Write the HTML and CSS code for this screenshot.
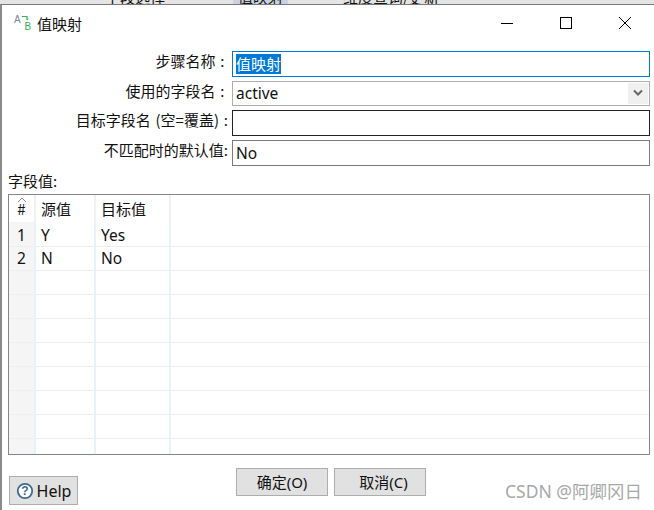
FILE: index.html
```html
<!DOCTYPE html>
<html lang="zh-CN">
<head>
  <meta charset="UTF-8" />
  <title>值映射</title>
  <link rel="stylesheet" href="styles.css">
</head>
<body>
  <div class="backdrop">
    <span class="tab-a">字段选择</span>
    <span class="tab-b">值映射</span>
    <span class="tab-c">维度查询/更新</span>
  </div>

  <div class="dialog">
    <div class="titlebar">
      <svg class="app-icon" width="18" height="18" viewBox="0 0 18 18">
        <text x="1" y="9" class="icon-a">A</text>
        <path d="M9 2.5h5v2" fill="none" stroke="#35b05a" stroke-width="1.2"/>
        <path d="M12.5 4.5h3.5l-1.7 2z" fill="#35b05a"/>
        <text x="11.5" y="16" class="icon-b">B</text>
      </svg>
      <span class="title">值映射</span>
      <div class="win-buttons">
        <svg width="14" height="14" viewBox="0 0 14 14"><path d="M1 7.5h12" stroke="#000" fill="none"/></svg>
        <svg width="14" height="14" viewBox="0 0 14 14"><rect x="1.5" y="1.5" width="11" height="11" stroke="#000" fill="none"/></svg>
        <svg width="14" height="14" viewBox="0 0 14 14"><path d="M1 1l12 12M13 1L1 13" stroke="#000" fill="none"/></svg>
      </div>
    </div>

    <div class="form">
      <div class="form-row">
        <label class="label-inset">步骤名称 :</label>
        <div class="field field-focus"><span class="selected">值映射</span></div>
      </div>
      <div class="form-row">
        <label class="label-inset">使用的字段名 :</label>
        <div class="field field-combo">
          active
          <span class="combo-btn">
            <svg width="10" height="8" viewBox="0 0 10 8"><path d="M1 1.5l4 4 4-4" stroke="#666" stroke-width="2" fill="none"/></svg>
          </span>
        </div>
      </div>
      <div class="form-row">
        <label>目标字段名 (空=覆盖) :</label>
        <div class="field field-dark"></div>
      </div>
      <div class="form-row">
        <label>不匹配时的默认值:</label>
        <div class="field field-gray">No</div>
      </div>
    </div>

    <div class="grid-label">字段值:</div>
    <div class="grid-wrap">
      <table class="grid">
        <colgroup>
          <col class="col-num"><col class="col-src"><col class="col-dst"><col>
        </colgroup>
        <thead>
          <tr>
            <th class="num">
              <svg class="sort" width="10" height="5" viewBox="0 0 10 5"><path d="M1 5l4-4 4 4" stroke="#888" fill="none"/></svg>
              #
            </th>
            <th>源值</th>
            <th>目标值</th>
            <th></th>
          </tr>
        </thead>
        <tbody>
          <tr class="first-row"><td class="num">1</td><td>Y</td><td>Yes</td><td></td></tr>
          <tr><td class="num">2</td><td>N</td><td>No</td><td></td></tr>
          <tr><td class="num"></td><td></td><td></td><td></td></tr>
          <tr><td class="num"></td><td></td><td></td><td></td></tr>
          <tr><td class="num"></td><td></td><td></td><td></td></tr>
          <tr><td class="num"></td><td></td><td></td><td></td></tr>
          <tr><td class="num"></td><td></td><td></td><td></td></tr>
          <tr><td class="num"></td><td></td><td></td><td></td></tr>
          <tr><td class="num"></td><td></td><td></td><td></td></tr>
          <tr><td class="num"></td><td></td><td></td><td></td></tr>
        </tbody>
      </table>
    </div>

    <div class="footer">
      <button class="btn btn-help">
        <svg width="18" height="18" viewBox="0 0 18 18">
          <circle cx="9" cy="9" r="7.2" fill="#fff" stroke="#3d6a8f" stroke-width="1.8"/>
          <text x="9" y="13" class="help-mark">?</text>
        </svg>
        Help
      </button>
      <div class="actions">
        <button class="btn btn-action">确定(O)</button>
        <button class="btn btn-action btn-cancel">取消(C)</button>
      </div>
      <div class="watermark">CSDN @阿卿冈日</div>
    </div>
  </div>
</body>
</html>
```

FILE: styles.css
```css
* {
  box-sizing: border-box;
}

html, body {
  height: 100%;
}

body {
  margin: 0;
  width: 654px;
  height: 510px;
  overflow: hidden;
  background: #fff;
  color: #111;
  font-family: "Noto Sans", "Noto Sans CJK SC", sans-serif;
  font-size: 15px;
  display: flex;
  flex-direction: column;
}

/* the window behind the dialog, only a sliver shows */
.backdrop {
  height: 4px;
  flex: none;
  overflow: hidden;
  background: #e4e4e4;
  display: flex;
  font-family: "Noto Sans CJK SC", sans-serif;
  font-size: 15px;
  line-height: 14px;
}

.backdrop span {
  margin-top: -10px;
  height: 14px;
}

.tab-a {
  margin-left: 105px;
}

.tab-b {
  margin-left: 68px;
  padding: 0 5px;
  background: #c9d3df;
}

.tab-c {
  margin-left: 55px;
}

.dialog {
  flex: 1;
  min-height: 0;
  border-top: 1px solid #7a7a7a;
  border-left: 2px solid #8a8a8a;
  display: flex;
  flex-direction: column;
}

.titlebar {
  height: 38px;
  flex: none;
  display: flex;
  align-items: center;
  padding: 0 0 2px 11px;
}

.icon-a {
  font: 10px "Liberation Sans", sans-serif;
  fill: #7b8794;
}

.icon-b {
  font: 10px "Liberation Sans", sans-serif;
  fill: #35b05a;
}

.title {
  margin-left: 6px;
  font-family: "Noto Sans CJK SC", sans-serif;
  font-size: 15px;
}

.win-buttons {
  margin-left: auto;
  display: flex;
  gap: 45px;
  padding-right: 22px;
}

.form {
  margin-top: 8px;
  padding-right: 4px;
  display: flex;
  flex-direction: column;
  gap: 4px;
}

.form-row {
  display: flex;
  height: 25.67px;
  align-items: stretch;
}

.form-row label {
  width: 230px;
  flex: none;
  text-align: right;
  padding-right: 4px;
  line-height: 20px;
  font-family: "Noto Sans CJK SC", sans-serif;
  font-size: 15px;
  word-spacing: 1.5px;
}

.form-row .label-inset {
  padding-right: 7.5px;
}

.field {
  flex: 1;
  border: 1px solid #adadad;
  padding-left: 3px;
  font-size: 15.5px;
  display: flex;
  align-items: center;
}

.field-focus {
  border-color: #0078d7;
}

.field-dark {
  border-color: #222;
}

.field-gray {
  border-color: #7a7a7a;
}

.selected {
  background: #0078d7;
  color: #fff;
  font-family: "Noto Sans CJK SC", sans-serif;
  font-size: 15px;
  line-height: 20px;
}

.combo-btn {
  margin-left: auto;
  width: 20px;
  height: 21px;
  margin-right: 1px;
  background: #f0f0f0;
  display: flex;
  align-items: center;
  justify-content: center;
}

.grid-label {
  margin: 5px 0 0 6px;
  line-height: 20px;
  font-family: "Noto Sans CJK SC", sans-serif;
  font-size: 15px;
}

.grid-wrap {
  margin: 3px 4px 0 6px;
  height: 261px;
  flex: none;
  border: 1px solid #80868b;
  overflow: hidden;
}

.grid {
  width: 100%;
  table-layout: fixed;
  border-collapse: collapse;
}

.col-num {
  width: 26px;
}

.col-src {
  width: 60px;
}

.col-dst {
  width: 75px;
}

.grid th {
  height: 27px;
  padding: 0 0 0 5px;
  font-weight: normal;
  text-align: left;
  font-family: "Noto Sans CJK SC", sans-serif;
  font-size: 15px;
  border-right: 2px solid #f0f0f0;
  position: relative;
}

.grid th:last-child,
.grid td:last-child {
  border-right: 0;
}

.grid td {
  height: 24px;
  padding: 0 0 0 5px;
  font-size: 15.5px;
  border-right: 2px solid #e8f0f8;
  border-bottom: 1px solid #eeeeee;
}

.grid .first-row td {
  padding-top: 2px;
}

.grid .num {
  text-align: center;
  padding-left: 0;
}

.grid td.num {
  background: #f5f5f5;
  border-right-color: #e8f0f8;
}

.sort {
  position: absolute;
  top: 2px;
  left: 8px;
}

.footer {
  flex: 1;
  position: relative;
  display: flex;
  padding: 0 0 5px 7px;
  align-items: flex-end;
}

.btn {
  background: #e1e1e1;
  border: 1px solid #adadad;
  color: #111;
  font-family: "Noto Sans", "Noto Sans CJK SC", sans-serif;
  font-size: 15px;
  padding: 0;
}

.btn-help {
  width: 69px;
  height: 29px;
  display: flex;
  align-items: center;
  justify-content: center;
  gap: 3px;
  font-size: 16px;
}

.help-mark {
  font: bold 12px "Liberation Sans", sans-serif;
  fill: #3d6a8f;
  text-anchor: middle;
}

.actions {
  position: absolute;
  top: 13px;
  left: 234px;
  display: flex;
  gap: 6px;
}

.btn-action {
  width: 92px;
  height: 28px;
}

.btn-cancel {
  padding-left: 7px;
}

/* site watermark sits over the dialog */
.watermark {
  position: absolute;
  top: 25px;
  left: 503px;
  color: #a8a8a8;
  font-size: 17.5px;
  line-height: 22px;
  white-space: nowrap;
}
```
